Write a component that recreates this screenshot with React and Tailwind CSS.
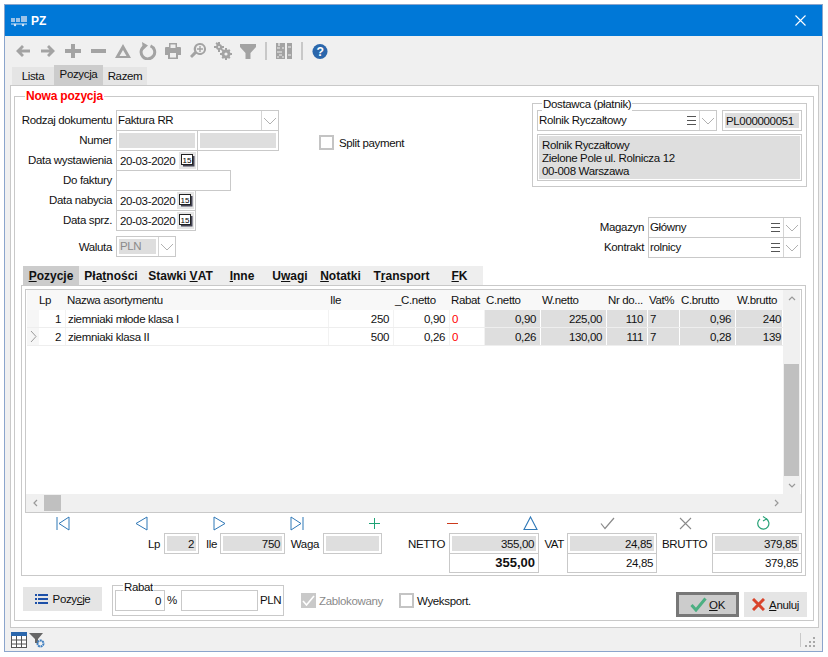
import React from "react";

const Chevron = ({ c = "#a8a8a8" }) => (
  <svg width="14" height="8" viewBox="0 0 14 8" fill="none"><path d="M1 1l6 6 6-6" stroke={c} strokeWidth="0.9" /></svg>
);
const Burger = () => (
  <svg width="9" height="11" viewBox="0 0 9 11" fill="none" stroke="#555"><path d="M0 1.5h9M0 5.5h9M0 9.5h9" /></svg>
);
const Cal = () => (
  <span className="flex h-[17px] w-[17px] shrink-0 items-center justify-center bg-[#e6e6e6]">
    <svg width="14" height="13" viewBox="0 0 14 13">
      <rect x="0.5" y="0.5" width="11" height="10" fill="#fff" stroke="#222" />
      <path d="M12 2h1.5v10.5H2V11h10z" fill="#445" />
      <text x="1.6" y="9.4" fontSize="8" fontFamily="Liberation Sans" letterSpacing="0" fill="#000">15</text>
    </svg>
  </span>
);

const TB = ({ children }) => (
  <span className="flex h-4 w-[25px] items-center justify-center">
    <svg width="18" height="18" viewBox="0 0 18 18" fill="#a3a3a3">{children}</svg>
  </span>
);

function Toolbar() {
  return (
    <div className="flex h-[30px] shrink-0 items-center pl-[5px]">
      <div className="flex items-center">
        <TB><path d="M8 3l2 2-2.5 2.5H16v3H7.5L10 13l-2 2-6-6z" /></TB>
        <TB><path d="M10 3L8 5l2.5 2.5H2v3h8.5L8 13l2 2 6-6z" /></TB>
        <TB><path d="M7 2h4v5h6v4h-6v5H7v-5H1V7h6z" /></TB>
        <TB><path d="M2 7h15v4H2z" /></TB>
        <TB><path fillRule="evenodd" d="M9 2l8 14H1zM9 8l-3.5 6h7z" /></TB>
        <TB><path fill="none" stroke="#a3a3a3" strokeWidth="3" d="M11.5 3.8a6.8 6.8 0 1 1-6 .4" /><path d="M3 0l6 3.5L4 8z" /></TB>
        <TB><path fillRule="evenodd" d="M5 1h8v4h3a1 1 0 0 1 1 1v7h-3v4H4v-4H1V6a1 1 0 0 1 1-1h3zM6.5 2.5V6h5V2.5zM6 11v4.5h6V11z" /></TB>
        <TB><path fillRule="evenodd" d="M11 1a6 6 0 1 1-3.6 10.8L3 16l-2-2 4.3-4.4A6 6 0 0 1 11 1zm0 2a4 4 0 1 0 0 8 4 4 0 0 0 0-8z" /><path d="M10.3 4h1.4v2.3H14v1.4h-2.3V10h-1.4V7.7H8V6.3h2.3z" /></TB>
        <TB>
          <circle cx="12" cy="12" r="4.5" /><circle cx="5" cy="5" r="3" />
          <path d="M4 0h2v10H4zM0 4h10v2H0zM1.5 1.5l1.4-1.4 5.9 7-1.4 1.4zM11 6h2v12h-2zM6 11h12v2H6zM7.5 8.5L9 7l7.5 8.5-1.5 1.5zM16.5 8.5L15 7l-7.5 8.5L9 17z" />
          <circle cx="12" cy="12" r="1.6" fill="#f0f0f0" />
          <circle cx="5" cy="5" r="1" fill="#f0f0f0" />
        </TB>
        <TB><path d="M1 2h16v3l-5.5 6v6h-5v-6L1 5z" /></TB>
      </div>
      <span className="ml-[5px] h-[18px] w-[2px] bg-[#c8c8c8]" />
      <span className="ml-[9px] flex h-4 w-4 items-center justify-center">
        <svg width="16" height="18" viewBox="0 0 16 18" fill="#a3a3a3"><path d="M0 1h9v16H0zM11 1h5v16h-5z" /><path d="M3 1v3M1 6h3M6 6h2M1 10h5M3 13h3M1 15h2M6 15h2M12 5h3M12 13h3" stroke="#f0f0f0" strokeWidth="1.2" /></svg>
      </span>
      <span className="ml-[9px] h-[18px] w-[2px] bg-[#c8c8c8]" />
      <span className="ml-[9px] flex h-4 w-4 items-center justify-center">
        <svg width="17" height="17" viewBox="0 0 17 17"><circle cx="8.5" cy="8.5" r="8" fill="#2b67ac" /><text x="8.5" y="13.5" textAnchor="middle" fontSize="13" fontWeight="700" fontFamily="Liberation Sans" fill="#fff">?</text></svg>
      </span>
    </div>
  );
}

const Input = ({ className, children }) => (
  <div className={"flex items-center border border-[#c9c9c9] bg-white " + className}>{children}</div>
);

const Gray = ({ className, children }) => (
  <div className={"border border-[#c9c9c9] bg-white p-[2px] " + className}>
    <div className="flex h-full items-center justify-end bg-[#dedede] px-[1px] pr-[2px]">{children}</div>
  </div>
);

const Row = ({ label, children, h = "h-[20px]" }) => (
  <div className={"flex " + h}>
    <div className="flex w-[98px] shrink-0 items-center justify-end whitespace-nowrap pr-[4px]">{label}</div>
    {children}
  </div>
);

const DateF = ({ w = "w-[81px]" }) => (
  <Input className={"-mb-px h-[21px] justify-between whitespace-nowrap pl-[3px] pr-[1px] " + w}>
    <span>20-03-2020</span>
    <Cal />
  </Input>
);

const Combo = ({ className, text, burger = true }) => (
  <div className={"-mb-px flex h-[21px] border border-[#c9c9c9] bg-white " + className}>
    <span className="flex-1 pl-[1px] leading-[19px]">{text}</span>
    {burger && <span className="flex w-[12px] items-center"><Burger /></span>}
    <span className="flex w-[17px] items-center justify-center border-l border-[#d4d4d4]"><Chevron /></span>
  </div>
);

function Check({ label, disabled, box }) {
  return (
    <div className={"flex items-center " + (disabled ? "text-[#8a8a8a]" : "")}>
      <span className={"flex h-[15px] w-[15px] items-center justify-center " + (disabled ? "bg-[#c9c9c9]" : "border-2 border-[#c4c4c4] bg-white")}>
        {disabled && <svg width="13" height="11" viewBox="0 0 13 11" fill="none"><path d="M1 6l3.5 4L12 1" stroke="#fff" strokeWidth="1.6" /></svg>}
      </span>
      <span className={box}>{label}</span>
    </div>
  );
}

const heads = ["", "Lp", "Nazwa asortymentu", "Ile", "_C.netto", "Rabat", "C.netto", "W.netto", "Nr do...", "Vat%", "C.brutto", "W.brutto"];
const rows = [
  ["1", "ziemniaki młode klasa I", "250", "0,90", "0", "0,90", "225,00", "110", "7", "0,96", "240"],
  ["2", "ziemniaki klasa II", "500", "0,26", "0", "0,26", "130,00", "111", "7", "0,28", "139"],
];
const gridCols = "grid grid-cols-[12px_27px_263px_65px_56px_35px_56px_66px_41px_32px_56px_47px]";

function DataGrid() {
  return (
    <div className="flex h-[224px] w-[777px] flex-col border border-[#c9c9c9] bg-white">
      <div className="flex min-h-0 flex-1 px-px">
        <div className="flex w-[756px] flex-col">
          <div className={gridCols + " h-[20px] items-center bg-[#f8f8f8]"}>
            {heads.map((h, i) => (
              <span key={i} className={"overflow-hidden whitespace-nowrap " + (i === 1 ? "" : "pl-[1px]")}>{h}</span>
            ))}
          </div>
          {rows.map((r, ri) => (
            <div key={ri} className={gridCols + " h-[18px] border-b border-[#eeeeee]"}>
              <span className="flex items-center justify-center bg-[#f6f6f6]">
                {ri === 1 && <svg width="7" height="11" viewBox="0 0 7 11" fill="none"><path d="M1 0l5 5.5L1 11" stroke="#999" /></svg>}
              </span>
              {r.map((c, i) => {
                const gray = i >= 5;
                const left = i === 1 || i === 4 || i === 8;
                return (
                  <span key={i} className={
                    "flex items-center overflow-hidden whitespace-nowrap border-r " +
                    (gray ? "border-white bg-[#dedede] " : "border-[#f2f2f2] ") +
                    (left ? "justify-start pl-[2px] " : i === 10 ? "justify-end pr-[1px] " : "justify-end pr-[4px] ") +
                    (i === 4 ? "text-[#ff0000] " : "")
                  }>{c}</span>
                );
              })}
            </div>
          ))}
        </div>
        <div className="ml-auto flex w-[17px] flex-col items-center bg-[#f0f0f0]">
          <span className="flex h-[17px] items-center"><svg width="8" height="5" viewBox="0 0 8 5" fill="none"><path d="M1 4l3-3 3 3" stroke="#999" strokeWidth="1.2" /></svg></span>
          <span className="mt-[57px] h-[112px] w-[15px] bg-[#c0c0c0]" />
          <span className="mt-auto flex h-[17px] items-center"><svg width="8" height="5" viewBox="0 0 8 5" fill="none"><path d="M1 1l3 3 3-3" stroke="#999" strokeWidth="1.2" /></svg></span>
        </div>
      </div>
      <div className="flex h-[18px] items-center bg-[#f0f0f0] pl-px pr-[22px]">
        <span className="flex w-[17px] justify-center"><svg width="5" height="8" viewBox="0 0 5 8" fill="none"><path d="M4 1L1 4l3 3" stroke="#999" strokeWidth="1.2" /></svg></span>
        <span className="h-[16px] w-[17px] bg-[#c0c0c0]" />
        <span className="ml-auto"><svg width="5" height="8" viewBox="0 0 5 8" fill="none"><path d="M1 1l3 3-3 3" stroke="#999" strokeWidth="1.2" /></svg></span>
      </div>
    </div>
  );
}

const N = ({ children }) => (
  <span className="flex items-center justify-center">
    <svg width="17" height="17" viewBox="0 0 17 17" fill="none">{children}</svg>
  </span>
);

function Nav() {
  const b = "#2f78b7";
  return (
    <div className="grid h-[20px] w-[777px] grid-cols-10 items-center">
      <N><path d="M2 2v13M14 2v13L4 8.5z" stroke={b} strokeWidth="1" /></N>
      <N><path d="M14 2v13L3 8.5z" stroke={b} /></N>
      <N><path d="M3 2v13l11-6.5z" stroke={b} /></N>
      <N><path d="M15 2v13M3 2v13l10-6.5z" stroke={b} /></N>
      <N><path d="M8.5 3v11M3 8.5h11" stroke="#1ea376" shapeRendering="crispEdges" /></N>
      <N><path d="M3 8.5h11" stroke="#cc3a1c" shapeRendering="crispEdges" /></N>
      <N><path d="M8.5 2L15 14.5H2z" stroke={b} strokeWidth="1.1" /></N>
      <N><path d="M2 8.5l4 5L15 3" stroke="#8a8a8a" strokeWidth="1.2" /></N>
      <N><path d="M3 3l11 11M14 3L3 14" stroke="#8a8a8a" strokeWidth="1.1" /></N>
      <N><path d="M11 3.6A5.6 5.6 0 1 1 5 4" stroke="#27a277" strokeWidth="1.2" /><path d="M8 1.5l3.5 2.4L8 6" stroke="#27a277" strokeWidth="1.1" /></N>
    </div>
  );
}

const Lbl = ({ w, children }) => <span className={"flex h-[21px] items-center justify-end whitespace-nowrap " + w}>{children}</span>;

const Two = ({ top, bottom, bold, ml }) => (
  <div className={"flex w-[90px] flex-col " + ml}>
    <Gray className="h-[21px]">{top}</Gray>
    <div className={"-mt-px flex h-[20px] items-center justify-end border border-[#c9c9c9] pr-[3px] " + (bold ? "text-[13px] font-bold tracking-normal" : "")}>{bottom}</div>
  </div>
);

function Values() {
  return (
    <div className="flex h-[44px] w-[777px] items-start">
      <Lbl w="w-[135px]">Lp</Lbl>
      <Gray className="ml-[4px] h-[21px] w-[35px]">2</Gray>
      <Lbl w="w-[18px]">Ile</Lbl>
      <Gray className="ml-[3px] h-[21px] w-[65px]">750</Gray>
      <Lbl w="w-[34px]">Waga</Lbl>
      <Gray className="ml-[4px] h-[21px] w-[59px]" />
      <Lbl w="w-[63px]">NETTO</Lbl>
      <Two ml="ml-[4px]" top="355,00" bottom="355,00" bold />
      <Lbl w="w-[25px]">VAT</Lbl>
      <Two ml="ml-[3px]" top="24,85" bottom="24,85" />
      <Lbl w="w-[50px]">BRUTTO</Lbl>
      <Two ml="ml-[5px]" top="379,85" bottom="379,85" />
    </div>
  );
}

const tabs2 = [
  ["w-[56px] bg-[#cccccc]", "P", "ozycje", ""],
  ["w-[64px]", "Pła", "t", "ności", 1],
  ["w-[75px]", "Stawki ", "V", "AT", 1],
  ["w-[48px]", "", "I", "nne", 1],
  ["w-[48px]", "U", "w", "agi", 1],
  ["w-[53px]", "", "N", "otatki", 1],
  ["w-[69px]", "T", "r", "ansport", 1],
  ["w-[47px]", "", "F", "K", 1],
];

export default function App() {
  return (
    <div className="h-[657px] w-[828px] bg-white pl-[4px] pt-[4px] font-['Liberation_Sans',sans-serif] text-[11.5px] leading-[14px] tracking-[-0.35px] text-[#111]">
      <div className="flex h-[648px] w-[819px] flex-col border border-[#8ba5cc] bg-[#f0f0f0]">
        {/* title */}
        <div className="flex h-[31px] shrink-0 items-center bg-[#0078d7] pl-[6px] pr-[16px] text-white">
          <svg width="17" height="12" viewBox="0 0 17 12">
            <path d="M0 3h4v4H0zM5 3h4v4H5zM10 1h6v6h-6z" fill="#9cc3e8" />
            <path d="M0 9h16" stroke="#d6e6f6" strokeWidth="1" />
            <circle cx="4" cy="10" r="1.2" fill="#d6e6f6" /><circle cx="12" cy="10" r="1.2" fill="#d6e6f6" />
          </svg>
          <span className="ml-[3px] text-[12px] font-bold tracking-normal">PZ</span>
          <svg className="ml-auto" width="11" height="11" viewBox="0 0 11 11" fill="none"><path d="M.5.5l10 10M10.5.5l-10 10" stroke="#fff" strokeWidth="1.1" /></svg>
        </div>
        <Toolbar />
        {/* tabs */}
        <div className="flex h-[19px] shrink-0 items-end pl-[7px]">
          <span className="flex h-[18px] w-[42px] items-center justify-center bg-[#e5e5e5]">Lista</span>
          <span className="flex h-[20px] w-[49px] items-center justify-center bg-[#cccccc] pb-[2px]">Pozycja</span>
          <span className="flex h-[18px] w-[44px] items-center justify-center bg-[#e5e5e5]">Razem</span>
        </div>
        {/* page */}
        <div className="ml-[5px] h-[543px] w-[809px] shrink-0 border border-[#c9c9c9] bg-white pl-[3px] pt-[10px]">
          <div className="relative h-[525px] w-[800px] border border-[#c9c9c9] pl-[6px]">
            <span className="absolute left-[10px] top-[-8px] bg-white px-px text-[12px] font-bold tracking-[-0.2px] text-[#ff0000]">Nowa pozycja</span>
            {/* top */}
            <div className="flex h-[169px]">
              <div className="-ml-[3px] pt-[13px]">
                <Row label="Rodzaj dokumentu"><Combo className="w-[163px]" text="Faktura RR" burger={false} /></Row>
                <Row label="Numer">
                  <Gray className="-mb-px h-[21px] w-[82px]" />
                  <Gray className="-mb-px -ml-px h-[21px] w-[82px]" />
                </Row>
                <Row label="Data wystawienia"><DateF w="w-[82px]" /></Row>
                <Row label="Do faktury"><Input className="-mb-px h-[21px] w-[115px]" /></Row>
                <Row label="Data nabycia"><DateF w="w-[80px]" /></Row>
                <Row label="Data sprz."><DateF w="w-[80px]" /></Row>
                <Row label="Waluta" h="mt-[6px] h-[21px]">
                  <div className="flex h-[21px] w-[60px] border border-[#c9c9c9] bg-white">
                    <span className="m-[2px] flex-1 bg-[#dedede] pl-px leading-[15px] text-[#8a8a8a]">PLN</span>
                    <span className="flex w-[17px] items-center justify-center border-l border-[#d4d4d4]"><Chevron /></span>
                  </div>
                </Row>
              </div>
              <div className="ml-[40px] pt-[38px]">
                <Check label="Split payment" box="ml-[5px]" />
              </div>
              <div className="ml-auto mr-[6px] w-[275px] pt-[6px]">
                <div className="relative h-[84px] border border-[#c9c9c9] px-[4px] pt-[6px]">
                  <span className="absolute left-[9px] top-[-7px] bg-white px-px">Dostawca (płatnik)</span>
                  <div className="flex items-start justify-between">
                    <Combo className="w-[180px]" text="Rolnik Ryczałtowy" />
                    <Gray className="h-[21px] w-[80px]"><span className="mr-auto">PL000000051</span></Gray>
                  </div>
                  <div className="mt-[3px] h-[47px] w-[265px] border border-[#c9c9c9] p-[1px]">
                    <div className="h-full bg-[#dedede] pl-[3px] pt-[3px] leading-[13px]">Rolnik Ryczałtowy<br />Zielone Pole ul. Rolnicza 12<br />00-008 Warszawa</div>
                  </div>
                </div>
                <div className="mt-[30px] flex flex-col items-end pr-[6px]">
                  <div className="flex items-center"><span className="mr-[4px]">Magazyn</span><Combo className="w-[153px]" text="Główny" /></div>
                  <div className="flex items-center"><span className="mr-[4px]">Kontrakt</span><Combo className="w-[153px]" text="rolnicy" /></div>
                </div>
              </div>
            </div>
            {/* tabs 2 */}
            <div className="ml-[2px] flex h-[19px] w-[460px] bg-[#eeeeee] text-[12px] font-bold tracking-normal">
              {tabs2.map((t, i) => (
                <span key={i} className={"flex items-center justify-center whitespace-pre " + t[0]}>
                  {t[4] ? <>{t[1]}<u>{t[2]}</u>{t[3]}</> : <><u>{t[1]}</u>{t[2]}</>}
                </span>
              ))}
            </div>
            <div className="h-[291px] w-[785px] border border-[#c9c9c9] bg-white pl-[3px] pt-[3px]">
              <DataGrid />
              <Nav />
              <Values />
            </div>
            {/* bottom */}
            <div className="flex items-start pt-[11px]">
              <button className="ml-[2px] flex h-[24px] w-[79px] items-center justify-center bg-[#e5e5e5]">
                <svg className="mr-[5px]" width="13" height="12" viewBox="0 0 13 12" fill="#1d50a8"><path d="M0 1h2v2H0zM3 1h10v2H3zM0 5h2v2H0zM3 5h10v2H3zM0 9h2v2H0zM3 9h10v2H3z" /></svg>
                <span>Pozy<u>c</u>je</span>
              </button>
              <div className="relative -mt-[2px] ml-[10px] flex h-[31px] w-[172px] border border-[#c9c9c9] pl-[2px] pt-[4px]">
                <span className="absolute left-[10px] top-[-6px] bg-white px-px">Rabat</span>
                <Input className="h-[21px] w-[50px] justify-end pr-[3px]">0</Input>
                <span className="ml-[2px] mt-[3px] w-[14px]">%</span>
                <Input className="h-[21px] w-[77px]" />
                <span className="ml-[2px] mt-[3px]">PLN</span>
              </div>
              <div className="ml-[17px] mt-[6px] w-[98px]"><Check disabled label="Zablokowany" box="ml-[3px]" /></div>
              <div className="mt-[6px]"><Check label="Wyeksport." box="ml-[3px]" /></div>
              <button className="ml-auto mt-[5px] flex h-[25px] w-[63px] items-center justify-center border-[3px] border-[#777777] bg-[#cccccc]">
                <svg className="mr-[2px]" width="17" height="15" viewBox="0 0 17 15" fill="none"><path d="M1.5 8l4.5 5L15.5 1.5" stroke="#4caf82" strokeWidth="3" /></svg>
                <span><u>O</u>K</span>
              </button>
              <button className="ml-[5px] mr-[6px] mt-[5px] flex h-[25px] w-[63px] items-center justify-center bg-[#e5e5e5]">
                <svg className="mr-[4px]" width="13" height="13" viewBox="0 0 13 13" fill="none"><path d="M1 1l11 11M12 1L1 12" stroke="#d9442b" strokeWidth="3" /></svg>
                <span><u>A</u>nuluj</span>
              </button>
            </div>
          </div>
        </div>
        {/* status */}
        <div className="flex flex-1 items-center pl-[6px] pr-[7px]">
          <svg width="16" height="16" viewBox="0 0 16 16" fill="#fff">
            <rect x="0.5" y="0.5" width="15" height="15" stroke="#555" />
            <rect x="0" y="0" width="16" height="4" fill="#2b67ac" />
            <path d="M5.5 4v11M10.5 4v11M1 8h14M1 12h14" stroke="#555" />
          </svg>
          <svg className="ml-[2px]" width="16" height="16" viewBox="0 0 16 16">
            <path d="M0 1h14l-5 6v4H6V7z" fill="#666" />
            <circle cx="11.5" cy="11.5" r="3" fill="none" stroke="#3f7fc0" strokeWidth="2" strokeDasharray="2 .6" />
          </svg>
          <span className="ml-auto flex h-[14px] items-end border-l border-[#c9c9c9] pl-[4px]">
            <svg width="10" height="10" viewBox="0 0 10 10" fill="#a8a8a8"><path d="M8 8h2v2H8zM4 8h2v2H4zM0 8h2v2H0zM8 4h2v2H8zM4 4h2v2H4zM8 0h2v2H8z" /></svg>
          </span>
        </div>
      </div>
    </div>
  );
}
